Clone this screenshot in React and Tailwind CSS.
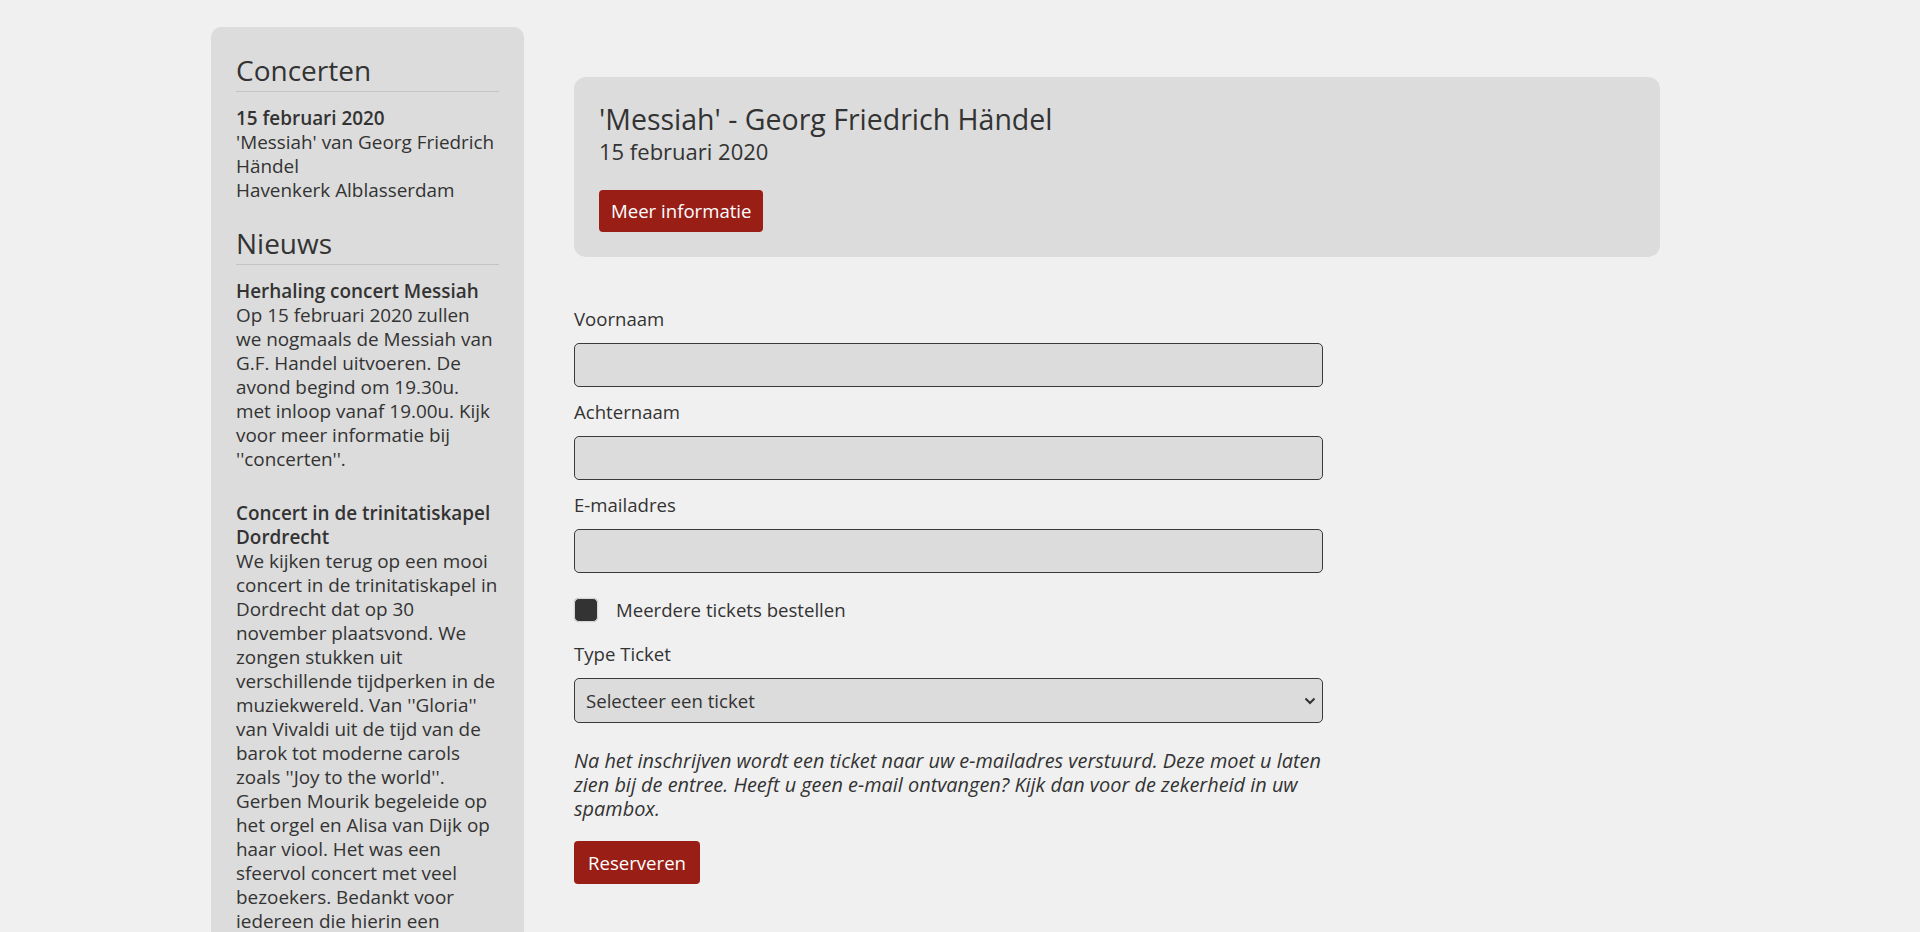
const L = ({ children, className = "" }) => (
  <span className={"block whitespace-nowrap " + className}>{children}</span>
);

export default function App() {
  const font = { fontFamily: '"Open Sans", "Noto Sans", sans-serif' };
  return (
    <div className="min-h-screen bg-[#f0f0f0] text-[#333333] text-[18.6px] leading-[24px]" style={font}>
      <div className="flex items-start pl-[211px]">
        {/* Sidebar */}
        <aside className="mt-[27px] w-[313px] shrink-0 rounded-[10px] bg-[#dcdcdc] px-[25px] pt-[25px] pb-8 text-[18.9px]">
          <h2 className="border-b border-[#c4c4c4] pb-[3px] text-[28px] leading-[36px] font-normal">Concerten</h2>
          <div className="mt-[14px]">
            <L className="font-semibold">15 februari 2020</L>
            <L>'Messiah' van Georg Friedrich</L>
            <L>Händel</L>
            <L>Havenkerk Alblasserdam</L>
          </div>
          <h2 className="mt-[23px] border-b border-[#c4c4c4] pb-[3px] text-[28px] leading-[36px] font-normal">Nieuws</h2>
          <div className="mt-[14px]">
            <L className="font-semibold">Herhaling concert Messiah</L>
            <p>
              <L>Op 15 februari 2020 zullen</L>
              <L>we nogmaals de Messiah van</L>
              <L>G.F. Handel uitvoeren. De</L>
              <L>avond begind om 19.30u.</L>
              <L>met inloop vanaf 19.00u. Kijk</L>
              <L>voor meer informatie bij</L>
              <L>''concerten''.</L>
            </p>
          </div>
          <div className="mt-[30px]">
            <L className="font-semibold">Concert in de trinitatiskapel</L>
            <L className="font-semibold">Dordrecht</L>
            <p>
              <L>We kijken terug op een mooi</L>
              <L>concert in de trinitatiskapel in</L>
              <L>Dordrecht dat op 30</L>
              <L>november plaatsvond. We</L>
              <L>zongen stukken uit</L>
              <L>verschillende tijdperken in de</L>
              <L>muziekwereld. Van ''Gloria''</L>
              <L>van Vivaldi uit de tijd van de</L>
              <L>barok tot moderne carols</L>
              <L>zoals ''Joy to the world''.</L>
              <L>Gerben Mourik begeleide op</L>
              <L>het orgel en Alisa van Dijk op</L>
              <L>haar viool. Het was een</L>
              <L>sfeervol concert met veel</L>
              <L>bezoekers. Bedankt voor</L>
              <L>iedereen die hierin een</L>
              <L>bijdrage heeft geleverd!</L>
            </p>
          </div>
        </aside>

        {/* Main */}
        <main className="ml-[50px] mt-[77px] w-[1086px] shrink-0">
          <section className="rounded-[12px] bg-[#dcdcdc] px-[25px] pt-[25px] pb-[25px]">
            <h3 className="text-[28.5px] leading-[34px] font-normal">'Messiah' - Georg Friedrich Händel</h3>
            <div className="text-[22px] leading-[30px]">15 februari 2020</div>
            <button className="mt-[24px] h-[42px] rounded-[4px] bg-[#981e16] px-[12px] text-[18.6px] text-white">
              Meer informatie
            </button>
          </section>

          <form className="mt-[50px] w-[749px]" onSubmit={(e) => e.preventDefault()}>
            <label className="block">Voornaam</label>
            <input type="text" className="mt-[12px] block h-[44px] w-full rounded-[5px] border border-[#3a3a3a] bg-[#dcdcdc] px-3" />
            <label className="mt-[13px] block">Achternaam</label>
            <input type="text" className="mt-[12px] block h-[44px] w-full rounded-[5px] border border-[#3a3a3a] bg-[#dcdcdc] px-3" />
            <label className="mt-[13px] block">E-mailadres</label>
            <input type="email" className="mt-[12px] block h-[44px] w-full rounded-[5px] border border-[#3a3a3a] bg-[#dcdcdc] px-3" />

            <div className="mt-[25px] flex items-center">
              <span className="h-[24px] w-[24px] rounded-[5px] border border-[#d8d8d8] bg-[#333333] shadow-[0_0_1px_rgba(0,0,0,0.3)]"></span>
              <span className="ml-[18px]">Meerdere tickets bestellen</span>
            </div>

            <label className="mt-[20px] block">Type Ticket</label>
            <div className="relative mt-[12px] flex h-[45px] w-full items-center rounded-[5px] border border-[#3a3a3a] bg-[#dcdcdc] pl-[11px]">
              <span>Selecteer een ticket</span>
              <svg className="absolute right-[6px] top-1/2 -translate-y-1/2" width="12" height="8" viewBox="0 0 12 8" fill="none">
                <path d="M1.5 1.5 L6 6 L10.5 1.5" stroke="#333" strokeWidth="2" />
              </svg>
            </div>

            <p className="mt-[26px] italic text-[19.9px] leading-[24px]">
              <L>Na het inschrijven wordt een ticket naar uw e-mailadres verstuurd. Deze moet u laten</L>
              <L>zien bij de entree. Heeft u geen e-mail ontvangen? Kijk dan voor de zekerheid in uw</L>
              <L>spambox.</L>
            </p>

            <button type="submit" className="mt-[20px] h-[43px] rounded-[4px] bg-[#981e16] px-[14px] text-[18.6px] text-white">
              Reserveren
            </button>
          </form>
        </main>
      </div>
    </div>
  );
}
